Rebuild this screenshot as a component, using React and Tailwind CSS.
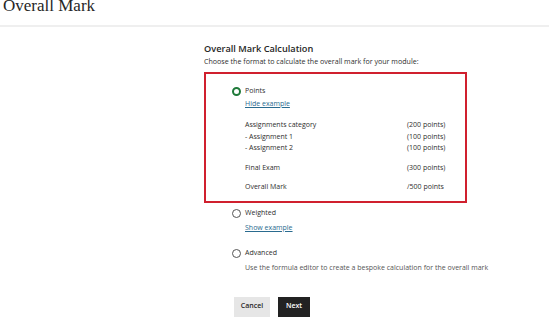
import React from 'react';

const rows = [
  { label: 'Assignments category', value: '(200 points)', gap: 'mt-[10px]' },
  { label: '- Assignment 1', value: '(100 points)', gap: '' },
  { label: '- Assignment 2', value: '(100 points)', gap: '' },
  { label: 'Final Exam', value: '(300 points)', gap: 'mt-[8.5px]' },
  { label: 'Overall Mark', value: '/500 points', gap: 'mt-[7.5px]' },
];

const Radio = ({ checked }) => (
  <span
    className={
      checked
        ? 'w-[9px] h-[9px] rounded-full border-[2.5px] border-[#1f7a3a] bg-white flex-shrink-0'
        : 'w-[9px] h-[9px] rounded-full border border-[#555] bg-white flex-shrink-0'
    }
  />
);

export default function App() {
  return (
    <div
      className="w-[549px] h-[323px] overflow-hidden bg-white text-[#2e2e2e]"
      style={{ fontFamily: '"Open Sans", sans-serif' }}
    >
      {/* page title */}
      <div className="h-[27px] overflow-hidden border-b-2 border-[#efefef] pl-[3px]">
        <h1
          className="text-[17px] leading-[18px] -mt-[3px] text-[#262626]"
          style={{ fontFamily: '"Liberation Serif", serif' }}
        >
          Overall Mark
        </h1>
      </div>

      <div className="ml-[204px] w-[263px]">
        <h2 className="mt-[15px] text-[9.2px] leading-[14px] font-semibold text-[#262626]">
          Overall Mark Calculation
        </h2>
        <p className="text-[7.1px] leading-[11px] whitespace-nowrap">
          Choose the format to calculate the overall mark for your module:
        </p>

        {/* selected option, highlighted */}
        <div className="mt-[5px] h-[131px] border-2 border-[#d0202e] pl-[26px] pr-[16px] pt-[12px]">
          <div className="flex items-center gap-[4px] h-[11px]">
            <Radio checked />
            <span className="text-[7px]">Points</span>
          </div>
          <a className="block ml-[13px] mt-[1px] text-[7px] leading-[11px] text-[#2a6b8f] underline">
            Hide example
          </a>
          <div className="ml-[13px] text-[7px] leading-[11.5px]">
            {rows.map((r) => (
              <div key={r.label} className={`flex justify-between ${r.gap}`}>
                <span>{r.label}</span>
                <span className="w-[42px] whitespace-nowrap">{r.value}</span>
              </div>
            ))}
          </div>
        </div>

        <div className="pl-[28px] mt-[5px]">
          <div className="flex items-center gap-[4px] h-[11px]">
            <Radio />
            <span className="text-[7px]">Weighted</span>
          </div>
          <a className="block ml-[13px] mt-[3px] text-[7px] leading-[11px] text-[#2a6b8f] underline">
            Show example
          </a>

          <div className="flex items-center gap-[4px] h-[11px] mt-[15px]">
            <Radio />
            <span className="text-[7px]">Advanced</span>
          </div>
          <p className="ml-[13px] mt-[3px] text-[7px] leading-[11px] text-[#555] whitespace-nowrap">
            Use the formula editor to create a bespoke calculation for the overall mark
          </p>

          <div className="flex gap-[8px] mt-[23.5px] ml-[2px]">
            <button className="w-[36px] h-[20px] bg-[#e6e6e6] text-[7px] font-semibold text-[#262626]">
              Cancel
            </button>
            <button className="w-[32px] h-[20px] bg-[#222] text-[7px] font-semibold text-white">
              Next
            </button>
          </div>
        </div>
      </div>
    </div>
  );
}
